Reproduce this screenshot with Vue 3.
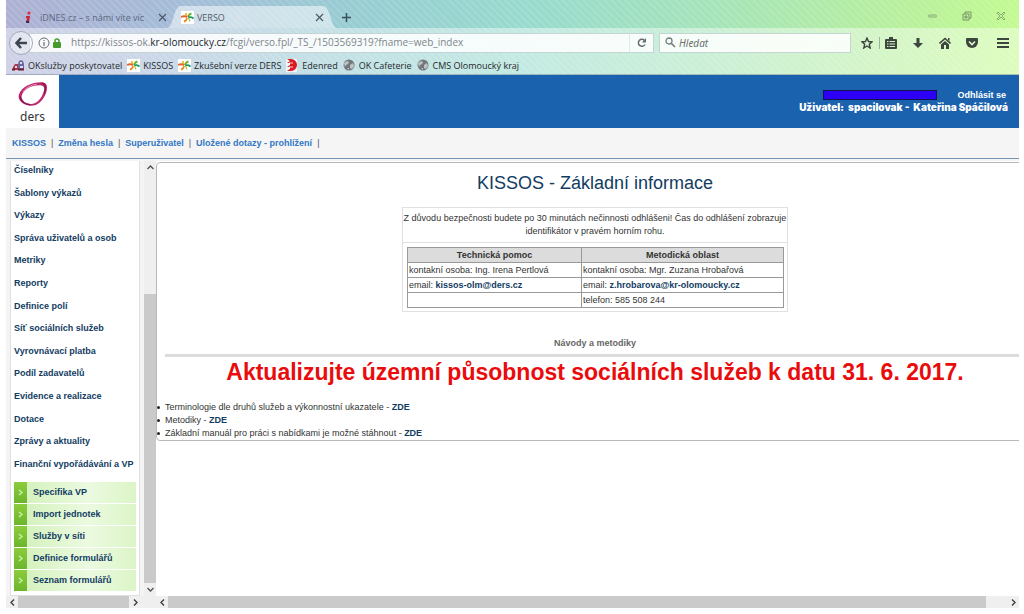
<script setup>
const bookmarks = [
  { label: 'OKslužby poskytovatel', icon: 'ok' },
  { label: 'KISSOS', icon: 'verso' },
  { label: 'Zkušební verze DERS', icon: 'verso' },
  { label: 'Edenred', icon: 'edenred' },
  { label: 'OK Cafeterie', icon: 'globe' },
  { label: 'CMS Olomoucký kraj', icon: 'globe' },
]
const topLinks = ['KISSOS', 'Změna hesla', 'Superuživatel', 'Uložené dotazy - prohlížení']
const menu = [
  'Číselníky', 'Šablony výkazů', 'Výkazy', 'Správa uživatelů a osob', 'Metriky', 'Reporty',
  'Definice polí', 'Síť sociálních služeb', 'Vyrovnávací platba', 'Podíl zadavatelů',
  'Evidence a realizace', 'Dotace', 'Zprávy a aktuality', 'Finanční vypořádávání a VP',
]
const submenu = ['Specifika VP', 'Import jednotek', 'Služby v síti', 'Definice formulářů', 'Seznam formulářů']
const manuals = [
  'Terminologie dle druhů služeb a výkonnostní ukazatele',
  'Metodiky',
  'Základní manuál pro práci s nabídkami je možné stáhnout',
]
</script>

<template>
  <div class="window">
    <svg class="defs" aria-hidden="true">
      <symbol id="verso" viewBox="0 0 13 13">
        <rect width="13" height="13" fill="#fff" />
        <path d="M6 6Q4.500 4.500 5 2" stroke="#f0b428" stroke-width="1.800" fill="none" />
        <path d="M7 6Q8 3 10.500 2.500" stroke="#6cb52c" stroke-width="1.800" fill="none" />
        <path d="M6 6Q3 4.500 0 6" stroke="#e8642c" stroke-width="1.800" fill="none" />
        <path d="M7 6.500Q10 5.500 12.500 7.500" stroke="#1c9a68" stroke-width="1.800" fill="none" />
        <path d="M6 7Q5.500 10 3 10.500" stroke="#e88c2c" stroke-width="1.800" fill="none" />
        <path d="M7 7Q9 8 8.500 10.500" stroke="#a8cc50" stroke-width="1.300" fill="none" />
      </symbol>
      <symbol id="globe" viewBox="0 0 13 13">
        <circle cx="6" cy="6" r="5.5" fill="#73787c" />
        <path d="M1 4l3-2 2 1-1 2-2 1-1 2zM7 6l3-2 1 3-2 3-2-1zM4 9l2 0 0 2z" fill="#bcc4c4" />
      </symbol>
      <symbol id="edenred" viewBox="0 0 13 13">
        <rect width="11" height="13" fill="#fff" opacity=".7" />
        <path d="M1 0h4a6 6 0 0 1 0 12H1l3-2V8H1l3-2V4H1l3-2z" fill="#da1a20" />
        <path d="M3 4h4M3 8h4" stroke="#fff" stroke-width=".8" />
      </symbol>
      <symbol id="ok" viewBox="0 0 13 13">
        <path d="M1 11V8l2-3h3v3h2v3z" fill="#a83848" />
        <path d="M6 5l1-3 2-1 2 1 1 3v5H6z" fill="#6868a0" />
        <path d="M8 3h2v2H8zM3 7h2v2H3zM8 7h3v2H8z" fill="#e0d8ec" />
        <path d="M0 10.500h3M6 10.500h6" stroke="#701c34" stroke-width="2" />
      </symbol>
    </svg>

    <header class="browser">
      <div class="tabs">
        <div class="tab idle">
          <svg class="fav" viewBox="0 0 13 13"><circle cx="7" cy="2" r="1.6" fill="#d83040" /><path d="M4 5h4L7 12H4L5 7H4z" fill="#c42840" /><path d="M4 10h3v2H4z" fill="#3c2858" /></svg>
          <span class="tab-name">iDNES.cz – s námi víte víc</span>
          <button class="plain" aria-label="Zavřít panel iDNES"><svg width="9" height="9" viewBox="0 0 9 9"><path d="M1 1l7 7M8 1L1 8" stroke="#4c5868" stroke-width="1.2" /></svg></button>
        </div>
        <div class="tab active">
          <svg class="tab-shape" viewBox="0 0 170 22" preserveAspectRatio="none"><path d="M0 22C7 21 6 0 14 0H156C164 0 163 21 170 22z" fill="#fff" fill-opacity=".5" /></svg>
          <svg class="fav"><use href="#verso" /></svg>
          <span class="tab-name">VERSO</span>
          <button class="plain" aria-label="Zavřít panel VERSO"><svg width="9" height="9" viewBox="0 0 9 9"><path d="M1 1l7 7M8 1L1 8" stroke="#4c5868" stroke-width="1.2" /></svg></button>
        </div>
        <button class="plain add" aria-label="Nový panel"><svg width="11" height="11" viewBox="0 0 11 11"><path d="M5.500 1v9M1 5.500h9" stroke="#38505c" stroke-width="1.500" /></svg></button>
        <div class="win-buttons">
          <button class="plain" aria-label="Minimalizovat"><svg width="10" height="10" viewBox="0 0 10 10"><rect x=".5" y="4" width="8" height="2" rx="1" fill="none" stroke="#7d9b6b" stroke-width=".8" /></svg></button>
          <button class="plain" aria-label="Obnovit"><svg width="10" height="10" viewBox="0 0 10 10"><path d="M1 3h6v6H1zM3 3V1h6v6H7M3 5h2v2H3z" fill="none" stroke="#6d8b60" stroke-width=".9" /></svg></button>
          <button class="plain" aria-label="Zavřít"><svg width="10" height="10" viewBox="0 0 10 10"><path d="M1 2L2 1l3 3 3-3 1 1-3 3 3 3-1 1-3-3-3 3-1-1 3-3z" fill="none" stroke="#7d9b6b" stroke-width=".8" /></svg></button>
        </div>
      </div>

      <div class="lower">
        <div class="toolbar">
          <button class="plain back" aria-label="Zpět"><svg width="12" height="12" viewBox="0 0 12 12"><path d="M6 1L1.500 6 6 11M2 6h10" fill="none" stroke="#3e4450" stroke-width="2.500" /></svg></button>
          <div class="address">
            <svg class="info" width="12" height="12" viewBox="0 0 12 12"><circle cx="6" cy="6" r="5" fill="none" stroke="#666c74" /><path d="M6 5v4M6 3v1" stroke="#666c74" stroke-width="1.200" /></svg>
            <svg width="8" height="10" viewBox="0 0 8 10"><rect y="4" width="8" height="6" rx="1" fill="#459c2c" /><path d="M2 5V3a2 2 0 0 1 4 0v2" fill="none" stroke="#459c2c" stroke-width="1.500" /></svg>
            <label class="url">
              <span>https://kissos-ok.<b>kr-olomoucky.cz</b>/fcgi/verso.fpl/_TS_/1503569319?fname=web_index</span>
              <input type="text" aria-label="Adresa">
            </label>
            <button class="plain reload" aria-label="Obnovit stránku"><svg width="10" height="10" viewBox="0 0 10 10"><path d="M8 6.500A3.500 3.500 0 1 1 7.500 2.500" fill="none" stroke="#666c70" stroke-width="1.500" /><path d="M9 0v4.500H5z" fill="#666c70" /></svg></button>
          </div>
          <label class="search">
            <svg width="11" height="11" viewBox="0 0 11 11"><circle cx="4" cy="4" r="3" fill="none" stroke="#707c78" stroke-width="1.300" /><path d="M6.500 6.500L10 10" stroke="#707c78" stroke-width="1.600" /></svg>
            <input type="search" placeholder="Hledat" aria-label="Hledat">
          </label>
          <div class="tools">
            <button class="plain" aria-label="Přidat záložku"><svg width="12" height="12" viewBox="0 0 12 12"><path d="M6 1l1.500 3.500 3.500.4-2.700 2.300.9 3.800L6 9l-3.200 2 .9-3.800L1 4.900l3.500-.4z" fill="none" stroke="#3c463e" stroke-width="1.400" /></svg></button>
            <button class="plain clip" aria-label="Záložky"><svg width="12" height="12" viewBox="0 0 12 12"><path d="M4 0h4v2h3q1 0 1 1v8q0 1-1 1H1q-1 0-1-1V3q0-1 1-1h3z" fill="#3c463e" /><path d="M2 4.500h1.500M4.500 4.500H10M2 7h1.500M4.500 7H10M2 9.500h1.500M4.500 9.500H10" stroke="#d9f2cf" stroke-width="1.200" /></svg></button>
            <button class="plain" aria-label="Stahování"><svg width="12" height="12" viewBox="0 0 12 12"><path d="M4.500 1h3v5H11l-5 5-5-5h3.500z" fill="#3c463e" /></svg></button>
            <button class="plain" aria-label="Domů"><svg width="12" height="12" viewBox="0 0 12 12"><path d="M.5 6.500L6 1.500l5.500 5" fill="none" stroke="#3c463e" stroke-width="1.600" /><path d="M2 7.500l4-3.500 4 3.500V12H7V8H5v4H2zM9 1h1.500v3L9 3z" fill="#3c463e" /></svg></button>
            <button class="plain" aria-label="Pocket"><svg width="12" height="12" viewBox="0 0 12 12"><path d="M1 1h10q1 0 1 1v3a6 6 0 0 1-12 0V2q0-1 1-1z" fill="#3c463e" /><path d="M3 4.500l3 3 3-3" fill="none" stroke="#e0f5d2" stroke-width="1.600" /></svg></button>
            <button class="plain burger" aria-label="Nabídka"><svg width="12" height="12" viewBox="0 0 12 12"><path d="M0 2h12M0 6h12M0 10h12" stroke="#3c463e" stroke-width="2" /></svg></button>
          </div>
        </div>
        <nav class="bookmarks" aria-label="Záložky">
          <a v-for="b in bookmarks" :key="b.label" href="#"><svg class="fav"><use :href="'#' + b.icon" /></svg>{{ b.label }}</a>
        </nav>
      </div>
    </header>

    <div class="banner">
      <a class="logo" href="#" aria-label="Úvod">
        <svg width="30" height="26" viewBox="0 0 32 27">
          <path fill-rule="evenodd" fill="#c0266c" d="M1 13C4 5 14 0 25 0c6 0 7 5 5 11-3 8-9 14-16 14C7 25-1 20 1 13zM4 14c-1 5 4 9 10 9 6 0 11-6 13-12 2-5 1-8-4-8C14 3 6 7 4 14z" />
          <path d="M25 1c5 0 5 5 3 11M2 15c1 5 5 8 11 9" fill="none" stroke="#7c1748" stroke-width="1.200" />
          <path d="M5 10Q11 3 20 2" fill="none" stroke="#ea9bc0" />
        </svg>
        <span>ders</span>
      </a>
      <div class="account">
        <div class="session"><span class="timer"></span><a href="#">Odhlásit se</a></div>
        <div class="user">Uživatel:&nbsp; spacilovak -&nbsp; Kateřina Spáčilová</div>
      </div>
    </div>

    <nav class="top-links">
      <template v-for="l in topLinks" :key="l"><a href="#">{{ l }}</a><i>|</i></template>
    </nav>

    <div class="frames">
      <aside class="side">
        <div class="side-top">
          <div class="panel">
            <ul class="menu"><li v-for="m in menu" :key="m"><a href="#">{{ m }}</a></li></ul>
            <ul class="submenu">
              <li v-for="s in submenu" :key="s"><a href="#"><svg width="13" height="21" viewBox="0 0 13 21"><path d="M5 8l3 2.500L5 13" fill="none" stroke="#c8eca0" stroke-width="1.500" /></svg>{{ s }}</a></li>
            </ul>
          </div>
          <div class="vbar">
            <button class="plain" aria-label="Nahoru"><svg width="7" height="5" viewBox="0 0 7 5"><path d="M.5 4l3-3 3 3" fill="none" stroke="#505050" stroke-width="1.300" /></svg></button>
            <div class="v-gap"></div><div class="v-thumb"></div>
            <button class="plain" aria-label="Dolů"><svg width="7" height="5" viewBox="0 0 7 5"><path d="M.5 1l3 3 3-3" fill="none" stroke="#505050" stroke-width="1.300" /></svg></button>
          </div>
        </div>
        <div class="hbar">
          <button class="plain" aria-label="Vlevo"><svg width="5" height="7" viewBox="0 0 5 7"><path d="M4 .5l-3 3 3 3" fill="none" stroke="#404040" stroke-width="1.400" /></svg></button>
          <div class="h-thumb"></div>
          <button class="plain" aria-label="Vpravo"><svg width="5" height="7" viewBox="0 0 5 7"><path d="M1 .5l3 3-3 3" fill="none" stroke="#404040" stroke-width="1.400" /></svg></button>
          <div class="corner"></div>
        </div>
      </aside>

      <main class="main">
        <div class="page">
          <section class="sheet">
            <h1>KISSOS - Základní informace</h1>
            <div class="card">
              <p>Z důvodu bezpečnosti budete po 30 minutách nečinnosti odhlášeni! Čas do odhlášení zobrazuje<br>identifikátor v pravém horním rohu.</p>
              <div class="contacts">
                <table>
                  <thead><tr><th>Technická pomoc</th><th>Metodická oblast</th></tr></thead>
                  <tbody>
                    <tr><td>kontakní osoba: Ing. Irena Pertlová</td><td>kontakní osoba: Mgr. Zuzana Hrobařová</td></tr>
                    <tr><td>email: <a href="#">kissos-olm@ders.cz</a></td><td>email: <a href="#">z.hrobarova@kr-olomoucky.cz</a></td></tr>
                    <tr><td></td><td>telefon: 585 508 244</td></tr>
                  </tbody>
                </table>
              </div>
            </div>
            <h3>Návody a metodiky</h3>
            <hr>
            <h2>Aktualizujte územní působnost sociálních služeb k datu 31. 6. 2017.</h2>
            <ul class="manuals"><li v-for="m in manuals" :key="m">{{ m }} - <a href="#">ZDE</a></li></ul>
          </section>
        </div>
        <div class="hbar">
          <button class="plain" aria-label="Posunout vlevo"><svg width="5" height="7" viewBox="0 0 5 7"><path d="M4 .5l-3 3 3 3" fill="none" stroke="#404040" stroke-width="1.400" /></svg></button>
          <div class="h-thumb"></div><div class="h-gap"></div>
          <button class="plain" aria-label="Posunout vpravo"><svg width="5" height="7" viewBox="0 0 5 7"><path d="M1 .5l3 3-3 3" fill="none" stroke="#404040" stroke-width="1.400" /></svg></button>
        </div>
      </main>
    </div>
  </div>
</template>

<style>
body { margin: 0; background: #fff; }
</style>

<style scoped>
* { box-sizing: border-box; }
.window {
  min-height: 100vh; padding: 0 5px 6px 6px; display: flex; flex-direction: column; overflow: hidden;
  font: 9px/13px "Liberation Sans", Arial, sans-serif; color: #333;
}
a { text-decoration: none; color: #123c62; font-weight: bold; }
ul { list-style: none; margin: 0; padding: 0; }
.defs { position: absolute; width: 0; height: 0; }
.plain { border: 0; padding: 0; margin: 0; background: none; display: flex; align-items: center; justify-content: center; flex: none; }
.fav { width: 13px; height: 13px; flex: none; }

.browser {
  font-family: "Open Sans", "Noto Sans", sans-serif; color: #2c3038;
  background:
    repeating-linear-gradient(45deg, rgba(255,255,255,.1) 0 2px, transparent 2px 5px),
    linear-gradient(100deg, #aeb0d4 0%, #a3bdd8 18%, #97ced2 36%, #98dbcd 52%, #a6e4b8 70%, #b8f09c 88%, #c4fb90 100%);
}
.tabs { height: 28px; display: flex; align-items: flex-end; padding-left: 16px; }
.tab { height: 22px; display: flex; align-items: center; position: relative; }
.tab > * { position: relative; }
.tab-name { flex: 1; white-space: nowrap; }
.idle { width: 145px; gap: 5px; color: #5c6880; }
.active { width: 170px; gap: 3px; padding: 0 13px 0 14px; color: #505c68; }
.tab .tab-shape { position: absolute; left: 0; top: 0; width: 100%; height: 100%; }
.add { height: 22px; margin-left: 4px; }
.win-buttons { margin-left: auto; height: 24px; display: flex; align-items: center; gap: 24px; padding-right: 13px; }
.lower { background: rgba(255,255,255,.42); border-bottom: 1px solid rgba(90,110,140,.4); }
.toolbar { height: 29px; display: flex; align-items: center; }
.back { width: 24px; height: 24px; border-radius: 50%; border: 1px solid #a0a8bc; background: rgba(255,255,255,.4); margin-left: 3px; z-index: 1; }
.address, .search { height: 20px; background: rgba(255,255,255,.85); display: flex; align-items: center; border: 1px solid rgba(100,140,140,.35); }
.address { flex: 1; margin-left: -4px; padding-left: 8px; gap: 3px; }
.url { flex: 1; position: relative; display: flex; align-items: center; height: 18px; margin-left: 7px; font-size: 10px; color: #80868b; white-space: nowrap; }
.url b { font-weight: 400; color: #22262a; }
.url input { position: absolute; inset: 0; width: 100%; border: 0; background: none; outline: none; }
.reload { width: 24px; height: 18px; border-left: 1px solid #e2eae8; }
.search { width: 192px; margin-left: 5px; padding-left: 5px; gap: 3px; }
.search input { flex: 1; min-width: 0; border: 0; padding: 0; background: none; outline: none; font: italic 10px "Noto Sans", sans-serif; }
.search input::placeholder { color: #68706c; opacity: 1; }
.tools { display: flex; align-items: center; gap: 15px; padding: 0 10px; }
.clip { margin-left: -9px; width: 18px; padding-left: 5px; border-left: 1px solid #9eb09c; }
.burger { margin-left: 4px; }
.bookmarks { height: 17px; display: flex; align-items: center; gap: 5px; padding-left: 6px; }
.bookmarks a { display: flex; align-items: center; gap: 3px; font-weight: 400; color: #24282c; white-space: nowrap; }

.banner { height: 53px; background: #1a61ae; display: flex; justify-content: space-between; }
.logo { width: 53px; background: #fff; display: flex; flex-direction: column; align-items: center; padding-top: 7px; color: #333; font: 12px/18px "Noto Sans", sans-serif; }
.account { padding: 14px 11px 0 0; text-align: right; color: #fff; }
.session { display: flex; justify-content: flex-end; align-items: center; gap: 20px; padding-right: 2px; line-height: 12px; }
.session a { color: #fff; }
.timer { width: 114px; height: 10px; background: #2d00f5; border: 1px solid #131350; }
.user { font-family: Inter, "Liberation Sans", sans-serif; font-size: 10px; font-weight: 900; white-space: nowrap; }
.top-links { height: 31px; background: #f5f5f5; border-bottom: 1px solid #7895b4; display: flex; align-items: center; padding-left: 6px; gap: 5px; }
.top-links a { color: #3277c4; }
.top-links i { font-style: normal; color: #555; }

.frames { flex: 1; display: flex; background: #f4f4f4; padding-top: 2px; }
.side { width: 150px; flex: none; display: flex; flex-direction: column; }
.side-top { flex: 1; display: flex; justify-content: space-between; }
.panel { width: 130px; margin-left: 4px; background: #fff; border: solid #e0e0e0; border-width: 0 1px 1px; padding: 2px 3px 4px; white-space: nowrap; }
.menu { height: 308px; display: flex; flex-direction: column; justify-content: space-between; line-height: 14px; }
.submenu { margin-top: 11px; display: grid; gap: 1px; }
.submenu a { display: flex; align-items: center; gap: 6px; height: 21px; background: linear-gradient(90deg, #d0f0b8, #ecfae0 60%, #dcf5c8); }
.submenu svg { background: linear-gradient(#8ccc3c, #6cb52c); }
.vbar { width: 12px; background: #efefef; display: flex; flex-direction: column; }
.vbar button { height: 13px; }
.v-gap { flex: 120; }
.v-thumb { flex: 289; background: #cacaca; }
.hbar { height: 12px; display: flex; background: #efefef; }
.hbar button { width: 12px; }
.h-thumb { flex: 818; background: #cacaca; }
.h-gap { flex: 21; }
.corner { width: 15px; background: #efefef; }
.main { flex: 1; min-width: 0; display: flex; flex-direction: column; background: #fff; }
.page { flex: 1; overflow: hidden; padding-top: 1px; }
.sheet { width: calc(100% + 15px); border: 1px solid #b8b8b8; border-radius: 4px; padding: 0 8px; }
h1 { margin: 10px 0 14px; text-align: center; font-size: 18px; line-height: 20px; font-weight: 400; color: #123c62; }
.card { width: 386px; margin: 0 auto; border: 1px solid #e0e0e0; }
.card p { margin: 0; padding: 4px 0; display: flex; justify-content: center; text-align: center; white-space: nowrap; border-bottom: 1px solid #e0e0e0; }
.contacts { padding: 4px 3px 3px 4px; }
table { width: 100%; border-collapse: collapse; }
th, td { border: 1px solid #999; padding: 1px; height: 15px; line-height: 12px; text-align: left; }
th { background: #dcdcdc; text-align: center; }
th:first-child { width: 174px; }
h3 { margin: 24px 0 4px; text-align: center; font-size: 9px; line-height: 14px; color: #666; }
hr { margin: 0; border: 0; height: 3px; background: #dcdcdc; }
h2 { margin: 0; text-align: center; font-size: 23px; line-height: 30px; color: #ea0c0c; white-space: nowrap; }
.manuals { padding-top: 14px; }
.manuals li { position: relative; }
.manuals li::before { content: ""; position: absolute; left: -8px; top: 5px; width: 3px; height: 3px; border-radius: 50%; background: #222; }
</style>
